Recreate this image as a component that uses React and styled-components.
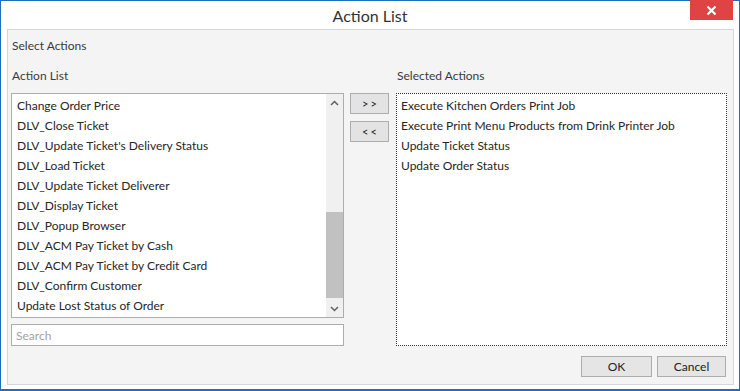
import React from "react";
import styled, { createGlobalStyle } from "styled-components";

const Global = createGlobalStyle`
  html, body { margin: 0; padding: 0; background: #ffffff; }
  * { box-sizing: border-box; }
  body { font-family: "Lato", "Noto Sans", "Liberation Sans", sans-serif; }
`;

const Window = styled.div`
  position: relative;
  width: 740px;
  height: 391px;
  border: 1px solid #1f6fbf;
  border-bottom-width: 2px;
  background: #ffffff;
  display: flex;
  flex-direction: column;
`;

const TitleBar = styled.div`
  height: 28px;
  display: flex;
  align-items: center;
  justify-content: center;
  font-size: 16px;
  color: #333;
  padding-top: 1px;
`;

const CloseButton = styled.div`
  position: absolute;
  top: -1px;
  right: 6px;
  width: 43px;
  height: 20px;
  background: #e04343;
  display: flex;
  align-items: center;
  justify-content: center;
`;

const Panel = styled.div`
  margin: 0 5px 0 6px;
  height: 356px;
  border: 1px solid #d6d6d6;
  background: #f4f4f4;
  padding: 5px 7px 6px 3px;
  display: flex;
  flex-direction: column;
  font-size: 12px;
  color: #2a2a2a;
`;

const Label = styled.div`
  height: 20px;
  line-height: 22px;
  padding-left: 1px;
  color: #3a3a3a;
`;

const Columns = styled.div`
  margin-top: 10px;
  display: grid;
  grid-template-columns: 333px 39px 332px;
  column-gap: 6px;
`;

const Column = styled.div`
  display: flex;
  flex-direction: column;
  margin-left: ${(p) => p.$offset || 0}px;
`;

const Middle = styled.div`
  padding-top: 28px;
  display: flex;
  flex-direction: column;
  gap: 7px;
`;

const ListBox = styled.div`
  margin-top: 8px;
  height: ${(p) => p.$h}px;
  background: #ffffff;
  border: 1px ${(p) => (p.$dotted ? "dotted #333" : "solid #adadad")};
  display: flex;
`;

const Items = styled.div`
  flex: 1;
  padding: 2px 0 0 ${(p) => p.$pl}px;
`;

const Item = styled.div`
  height: 20px;
  line-height: 20px;
  white-space: nowrap;
  color: #262626;
`;

const ScrollBar = styled.div`
  width: 17px;
  background: #f0f0f0;
  display: flex;
  flex-direction: column;
`;

const Arrow = styled.div`
  height: 17px;
  display: flex;
  align-items: center;
  justify-content: center;
`;

const Track = styled.div`
  flex: 1;
  display: flex;
  flex-direction: column;
  padding: 101px 0 2px 0;
`;

const Thumb = styled.div`
  flex: 1;
  background: #c1c1c1;
`;

const Search = styled.input`
  margin-top: 6px;
  height: 22px;
  border: 1px solid #adadad;
  background: #fff;
  font: inherit;
  font-size: 12px;
  padding: 0 4px;
  outline: none;
  &::placeholder { color: #a3a3a3; }
`;

const SmallButton = styled.div`
  height: 21px;
  border: 1px solid #adadad;
  background: #e3e3e3;
  display: flex;
  align-items: center;
  justify-content: center;
  font-size: 11px;
  letter-spacing: 2px;
  color: #222;
  padding-left: 2px;
`;

const Footer = styled.div`
  margin-top: 10px;
  display: flex;
  justify-content: flex-end;
  gap: 5px;
`;

const DialogButton = styled.div`
  width: ${(p) => p.$w}px;
  height: 21px;
  border: 1px solid #adadad;
  background: #e5e5e5;
  display: flex;
  align-items: center;
  justify-content: center;
  font-size: 12px;
  color: #222;
`;

const Chevron = ({ up }) => (
  <svg width="9" height="6" viewBox="0 0 9 6">
    <path
      d={up ? "M1 5 L4.5 1.5 L8 5" : "M1 1 L4.5 4.5 L8 1"}
      fill="none"
      stroke="#606060"
      strokeWidth="1.5"
    />
  </svg>
);

const actions = [
  "Change Order Price",
  "DLV_Close Ticket",
  "DLV_Update Ticket's Delivery Status",
  "DLV_Load Ticket",
  "DLV_Update Ticket Deliverer",
  "DLV_Display Ticket",
  "DLV_Popup Browser",
  "DLV_ACM Pay Ticket by Cash",
  "DLV_ACM Pay Ticket by Credit Card",
  "DLV_Confirm Customer",
  "Update Lost Status of Order",
];

const selected = [
  "Execute Kitchen Orders Print Job",
  "Execute Print Menu Products from Drink Printer Job",
  "Update Ticket Status",
  "Update Order Status",
];

export default function App() {
  return (
    <>
      <Global />
      <Window>
        <TitleBar>Action List</TitleBar>
        <CloseButton>
          <svg width="11" height="11" viewBox="0 0 11 11">
            <path d="M1.5 1.5 L9.5 9.5 M9.5 1.5 L1.5 9.5" stroke="#fff" strokeWidth="2.2" />
          </svg>
        </CloseButton>
        <Panel>
          <Label>Select Actions</Label>
          <Columns>
            <Column>
              <Label>Action List</Label>
              <ListBox $h={225}>
                <Items $pl={5}>
                  {actions.map((a) => (
                    <Item key={a}>{a}</Item>
                  ))}
                </Items>
                <ScrollBar>
                  <Arrow><Chevron up /></Arrow>
                  <Track><Thumb /></Track>
                  <Arrow><Chevron /></Arrow>
                </ScrollBar>
              </ListBox>
              <Search placeholder="Search" />
            </Column>
            <Middle>
              <SmallButton>&gt;&gt;</SmallButton>
              <SmallButton>&lt;&lt;</SmallButton>
            </Middle>
            <Column $offset={1}>
              <Label>Selected Actions</Label>
              <ListBox $h={253} $dotted>
                <Items $pl={4}>
                  {selected.map((a) => (
                    <Item key={a}>{a}</Item>
                  ))}
                </Items>
              </ListBox>
            </Column>
          </Columns>
          <Footer>
            <DialogButton $w={71}>OK</DialogButton>
            <DialogButton $w={69}>Cancel</DialogButton>
          </Footer>
        </Panel>
      </Window>
    </>
  );
}
